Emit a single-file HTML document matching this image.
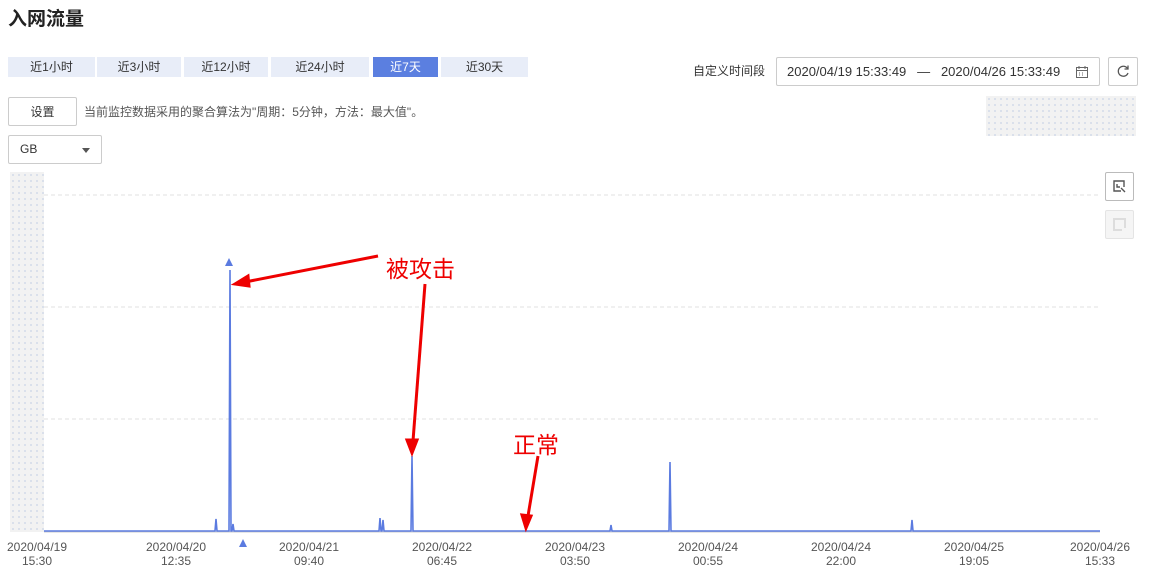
<!DOCTYPE html>
<html><head><meta charset="utf-8"><style>
body{margin:0;width:1150px;height:574px;background:#fff;font-family:"Liberation Sans","Noto Sans CJK SC",sans-serif;color:#333;position:relative;overflow:hidden}
.a{position:absolute}
.tab{position:absolute;top:57px;height:20px;background:#e8edf8;font-size:12px;line-height:20px;text-align:center;color:#333}
.dots{background-color:#f2f2f2;background-image:radial-gradient(#9ab0d8 0.6px,transparent 0.8px);background-size:6px 6px}
.lab{position:absolute;top:540px;font-size:12px;color:#555;text-align:center;width:80px;line-height:14px}
</style></head><body>
<div class="a" style="left:8px;top:4px;font-size:19px;font-weight:bold;color:#222">入网流量</div>
<div class="tab" style="left:8px;width:87px">近1小时</div>
<div class="tab" style="left:97px;width:84px">近3小时</div>
<div class="tab" style="left:184px;width:84px">近12小时</div>
<div class="tab" style="left:271px;width:98px">近24小时</div>
<div class="tab" style="left:373px;width:65px;background:#5b7fe0;color:#fff">近7天</div>
<div class="tab" style="left:441px;width:87px">近30天</div>
<div class="a" style="left:693px;top:62px;font-size:12px">自定义时间段</div>
<div class="a" style="left:776px;top:57px;width:322px;height:27px;border:1px solid #ccc;border-radius:2px;font-size:13px;line-height:27px;color:#333"><span style="margin-left:10px">2020/04/19 15:33:49&nbsp;&nbsp;&nbsp;—&nbsp;&nbsp;&nbsp;2020/04/26 15:33:49</span>
<svg class="a" style="left:298px;top:7px" width="14" height="14" viewBox="0 0 14 14" fill="none" stroke="#666"><rect x="1.5" y="2.5" width="11" height="10"/><path d="M1.5 5.5h11M4 1v3M10 1v3M4 8h1M7 8h1M10 8h0M4 10h1M7 10h1"/></svg></div>
<div class="a" style="left:1108px;top:57px;width:28px;height:27px;border:1px solid #ccc;border-radius:2px"><svg class="a" style="left:7px;top:6px" width="14" height="14" viewBox="0 0 14 14" fill="none" stroke="#555" stroke-width="1.3"><path d="M11.5 4.5A5 5 0 1 0 12 9"/><path d="M12 1.5v3.5h-3.5"/></svg></div>
<div class="a" style="left:8px;top:97px;width:67px;height:27px;border:1px solid #ccc;border-radius:2px;font-size:12px;line-height:28px;text-align:center">设置</div>
<div class="a" style="left:84px;top:103px;font-size:12px;color:#555">当前监控数据采用的聚合算法为"周期：5分钟，方法：最大值"。</div>
<div class="a dots" style="left:986px;top:96px;width:150px;height:40px"></div>
<div class="a" style="left:8px;top:135px;width:92px;height:27px;border:1px solid #ccc;border-radius:2px;font-size:12px;line-height:27px"><span style="margin-left:11px">GB</span><span class="a" style="left:73px;top:12px;border:4px solid transparent;border-top:5px solid #555"></span></div>
<div class="a dots" style="left:10px;top:172px;width:34px;height:360px"></div>
<div class="a" style="left:1105px;top:172px;width:27px;height:27px;border:1px solid #bbb;border-radius:2px"><svg class="a" style="left:6px;top:6px" width="15" height="15" viewBox="0 0 15 15" fill="none" stroke="#555" stroke-width="1.4"><path d="M9 12H2V2h10v6"/><path d="M5 5v3h3M9 9l4 4"/></svg></div>
<div class="a" style="left:1105px;top:210px;width:27px;height:27px;border:1px solid #e4e4e4;border-radius:2px;background:#f5f5f5"><svg class="a" style="left:6px;top:6px" width="15" height="15" viewBox="0 0 15 15" fill="none" stroke="#ddd" stroke-width="2"><path d="M10 13H2V2h11v9"/></svg></div>
<svg class="a" style="left:0;top:0" width="1150" height="574">
<g stroke="#e0e0e0" stroke-dasharray="4 3"><path d="M44 195H1100M44 307H1100M44 419H1100"/></g>
<path d="M44 532H1100" stroke="#ccc"/>
<path fill="none" stroke="#5b7be0" stroke-width="1.6" d="M44 531H215L216 519L217 531H229L230 270L231 531H232L233 524L234 531H379L380 518L381 531H382L383 520L384 531H411L412 456L413 531H610L611 525L612 531H669L670 462L671 531H911L912 520L913 531H1100"/>
<path d="M229 258l-4 8h8zM243 539l-4 8h8z" fill="#5b7be0"/>
<g stroke="#e00" stroke-width="3" fill="#e00">
<path d="M378 256L245 282"/><path d="M235 284l13-8 1 10z"/>
<path d="M425 284L413 441"/><path d="M412 453l-5-13h10z"/>
<path d="M538 456L528 516"/><path d="M526 528l-4-13 9 1z"/>
</g>
</svg>
<div class="a" style="left:386px;top:250px;font-size:23px;color:#e00">被攻击</div>
<div class="a" style="left:513px;top:426px;font-size:23px;color:#e00">正常</div>
<div class="lab" style="left:-3px">2020/04/19<br>15:30</div>
<div class="lab" style="left:136px">2020/04/20<br>12:35</div>
<div class="lab" style="left:269px">2020/04/21<br>09:40</div>
<div class="lab" style="left:402px">2020/04/22<br>06:45</div>
<div class="lab" style="left:535px">2020/04/23<br>03:50</div>
<div class="lab" style="left:668px">2020/04/24<br>00:55</div>
<div class="lab" style="left:801px">2020/04/24<br>22:00</div>
<div class="lab" style="left:934px">2020/04/25<br>19:05</div>
<div class="lab" style="left:1060px">2020/04/26<br>15:33</div>
</body></html>
